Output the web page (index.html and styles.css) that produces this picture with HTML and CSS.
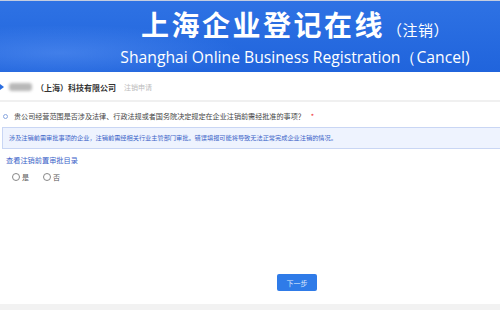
FILE: index.html
```html
<!DOCTYPE html>
<html>
<head>
    <meta charset="utf-8">
    <title>上海企业登记在线（注销）</title>
    <link rel="stylesheet" href="styles.css">
</head>
<body>
<div class="banner">
    <div class="banner-text">
        <div class="banner-title">上海企业登记在线<span class="banner-sub">（注销）</span></div>
        <div class="banner-en">Shanghai Online Business Registration（Cancel)</div>
    </div>
</div>
<div class="company-bar">
    <i class="mark"></i>
    <span class="blurred"></span>
    <b class="company-name">（上海）科技有限公司</b>
    <span class="company-tag">注销申请</span>
</div>
<div class="form">
    <div class="question">
        <i class="q-dot"></i>
        <span>贵公司经营范围是否涉及法律、行政法规或者国务院决定规定在企业注销前需经批准的事项？</span>
        <span class="required">*</span>
    </div>
    <div class="tip">涉及注销前需审批事项的企业，注销前需经相关行业主管部门审批。错误填报可能将导致无法正常完成企业注销的情况。</div>
    <a class="link" href="#">查看注销前置审批目录</a>
    <div class="radios">
        <label class="radio"><i class="radio-circle"></i>是</label>
        <label class="radio"><i class="radio-circle"></i>否</label>
    </div>
</div>
<div class="actions">
    <button class="btn-next">下一步</button>
</div>
<div class="footer"></div>
</body>
</html>
```

FILE: styles.css
```css
html, body {
    margin: 0;
    height: 100%;
    overflow: hidden;
    background: #fff;
}

body {
    display: flex;
    flex-direction: column;
    font-family: "Noto Sans CJK SC", "Noto Sans", sans-serif;
    color: #333;
}

.banner {
    height: 71px;
    border-top: 1px solid #c3cde0;
    background:
        radial-gradient(ellipse 260px 40px at 60px 52px, rgba(120, 170, 255, 0.35), rgba(120, 170, 255, 0) 70%),
        linear-gradient(#2e72e4, #2064dc);
    display: flex;
    justify-content: center;
}

.banner-text {
    padding-left: 90px;
    text-align: center;
    color: #fff;
}

.banner-title {
    margin-top: 7px;
    font-size: 28px;
    line-height: 32px;
    font-weight: bold;
    letter-spacing: 2.5px;
    white-space: nowrap;
}

.banner-sub {
    margin-left: 2px;
    font-size: 15px;
    font-weight: normal;
    letter-spacing: 0.5px;
}

.banner-en {
    margin-top: 1px;
    font-family: "Open Sans", sans-serif;
    font-size: 15.7px;
    line-height: 20px;
    white-space: nowrap;
}

.company-bar {
    height: 26px;
    border-bottom: 2px solid #f0f0f0;
    display: flex;
    align-items: center;
    margin-top: 2px;
}

.mark {
    width: 0;
    height: 0;
    border-top: 3px solid transparent;
    border-bottom: 3px solid transparent;
    border-left: 4px solid #2a6de0;
}

.blurred {
    width: 23px;
    height: 8px;
    margin-left: 5px;
    background: #b8b8b8;
    border-radius: 3px;
    filter: blur(1.5px);
}

.company-name {
    margin-left: 4px;
    font-size: 8px;
    color: #333;
}

.company-tag {
    margin-left: 8px;
    font-size: 7px;
    color: #bbb;
}

.form {
    padding: 9px 0 0 2px;
}

.question {
    display: flex;
    align-items: center;
    font-size: 7.1px;
    color: #444;
    height: 10px;
}

.q-dot {
    width: 3px;
    height: 3px;
    border: 1px solid #8aa8e0;
    border-radius: 50%;
    margin: 0 6px 0 1px;
}

.required {
    color: #f03030;
    margin-left: 6px;
}

.tip {
    margin-top: 6px;
    height: 20px;
    line-height: 20px;
    padding-left: 6px;
    border: 1px solid #c9d6f4;
    border-right: 0;
    background: #eef3fe;
    color: #3c63c8;
    font-size: 6.2px;
    white-space: nowrap;
}

.link {
    display: block;
    margin: 6px 0 0 4px;
    font-size: 7.2px;
    line-height: 10px;
    color: #3a62c8;
    text-decoration: none;
}

.radios {
    display: flex;
    gap: 14px;
    margin: 7px 0 0 10px;
}

.radio {
    display: flex;
    align-items: center;
    font-size: 7px;
    color: #555;
}

.radio-circle {
    width: 6px;
    height: 6px;
    border: 1px solid #888;
    border-radius: 50%;
    margin-right: 2px;
}

.actions {
    flex: 1;
    display: flex;
    justify-content: center;
    align-items: flex-end;
    padding: 0 0 13px 94px;
}

.btn-next {
    width: 40px;
    height: 17px;
    padding: 0;
    border: 0;
    border-radius: 2px;
    background: #2f7be8;
    color: #dfe9fb;
    font-family: inherit;
    font-size: 7px;
}

.footer {
    height: 6px;
    background: #f2f2f2;
}
```
